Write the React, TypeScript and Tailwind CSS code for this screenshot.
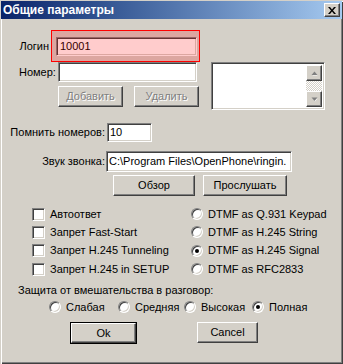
import React from "react";

const sunken =
  "bg-white border border-t-[#808080] border-l-[#808080] border-b-white border-r-white shadow-[inset_1px_1px_0_#404040,inset_-1px_-1px_0_#d4d0c8]";
const raised =
  "bg-[#d4d0c8] border border-t-white border-l-white border-b-[#404040] border-r-[#404040] shadow-[inset_-1px_-1px_0_#808080,inset_1px_1px_0_#d4d0c8]";

const Button = ({ label, w, disabled, isDefault }: { label: string; w: string; disabled?: boolean; isDefault?: boolean }) => {
  const btn = (
    <div className={`${raised} ${isDefault ? "w-full h-full" : `${w} h-[21px]`} flex items-center justify-center`}>
      <span className={disabled ? "text-[#808080] [text-shadow:1px_1px_0_#fff]" : ""}>{label}</span>
    </div>
  );
  if (!isDefault) return btn;
  return <div className={`${w} h-[22px] border border-black`}>{btn}</div>;
};

const Checkbox = () => <div className={`${sunken} w-[13px] h-[13px] shrink-0`} />;

const Radio = ({ on }: { on?: boolean }) => (
  <div className="w-[12px] h-[12px] shrink-0 rounded-full bg-white border border-t-[#808080] border-l-[#808080] border-b-white border-r-white shadow-[inset_1px_1px_0_#404040,inset_-1px_-1px_0_#d4d0c8] flex items-center justify-center">
    {on && <div className="w-[4px] h-[4px] rounded-full bg-black" />}
  </div>
);

const Arrow = ({ up }: { up?: boolean }) => (
  <svg width="7" height="5" viewBox="0 0 7 5">
    {up ? (
      <>
        <path d="M1.5 4.5h5L4 1.5z" fill="#fff" />
        <path d="M0.5 4h6L3.5 0.5z" fill="#808080" />
      </>
    ) : (
      <>
        <path d="M1.5 1.5h5L4 4.5z" fill="#fff" />
        <path d="M0.5 0.5h6L3.5 4z" fill="#808080" />
      </>
    )}
  </svg>
);

export default function App() {
  return (
    <div className="w-[343px] h-[364px] bg-[#d4d0c8] font-['Liberation_Sans',Arial,sans-serif] text-[11px] text-black leading-none shadow-[inset_1px_1px_0_#d4d0c8,inset_2px_2px_0_#fff,inset_-1px_-1px_0_#404040,inset_-2px_-2px_0_#808080] flex flex-col overflow-hidden select-none">
      {/* Title bar */}
      <div className="mx-[1px] mt-[1px] h-[18px] bg-gradient-to-r from-[#0a246a] to-[#a6caf0] flex items-center justify-between pl-[2px] pr-[2px]">
        <span className="text-white font-bold text-[12px]">Общие параметры</span>
        <div className={`${raised} w-[16px] h-[14px] flex items-center justify-center`}>
          <svg width="8" height="7" viewBox="0 0 8 7">
            <path d="M0 0h2l2 2.5L6 0h2L5 3.5 8 7H6L4 4.5 2 7H0l3-3.5z" fill="#000" />
          </svg>
        </div>
      </div>

      {/* Login */}
      <div className="mt-[11px] h-[32px] flex items-center">
        <span className="w-[50px] text-right pr-[1px]">Логин</span>
        <div className="relative ml-[1px] w-[149px] h-[32px] flex items-center pl-[5px]">
          <div className={`${sunken} w-[141px] h-[19px] flex items-center pl-[3px]`}>10001</div>
          <div className="absolute inset-0 border border-[#ff0000] bg-[rgba(255,0,0,0.2)]" />
        </div>
      </div>

      {/* Number + list */}
      <div className="flex h-[48px]">
        <div className="ml-[19px] w-[180px] flex flex-col">
          <div className="flex items-center h-[20px]">
            <span className="w-[39px]">Номер:</span>
            <div className={`${sunken} w-[139px] h-[20px]`} />
          </div>
          <div className="flex mt-[4px] ml-[39px] gap-[11px]">
            <Button label="Добавить" w="w-[65px]" disabled />
            <Button label="Удалить" w="w-[65px]" disabled />
          </div>
        </div>
        <div className={`${sunken} ml-[12px] w-[114px] h-[48px] flex p-[2px]`}>
          <div className="flex-1" />
          <div className="w-[16px] flex flex-col">
            <div className={`${raised} h-[16px] flex items-center justify-center`}>
              <Arrow up />
            </div>
            <div className="flex-1 bg-[repeating-conic-gradient(#fff_0_25%,#d4d0c8_0_50%)] bg-[length:2px_2px]" />
            <div className={`${raised} h-[16px] flex items-center justify-center`}>
              <Arrow />
            </div>
          </div>
        </div>
      </div>

      {/* Remember */}
      <div className="mt-[13px] flex items-center h-[19px]">
        <span className="w-[106px] text-right pr-[1px]">Помнить номеров:</span>
        <div className={`${sunken} ml-[1px] w-[45px] h-[19px] flex items-center pl-[2px]`}>10</div>
      </div>

      {/* Ring sound */}
      <div className="mt-[9px] flex items-center h-[21px]">
        <span className="w-[106px] text-right pr-[1px]">Звук звонка:</span>
        <div className={`${sunken} w-[186px] h-[21px] flex items-center pl-[2px] overflow-hidden whitespace-nowrap`}>
          C:\Program Files\OpenPhone\ringin.
        </div>
      </div>

      <div className="mt-[3px] flex ml-[113px] gap-[8px]">
        <Button label="Обзор" w="w-[82px]" />
        <Button label="Прослушать" w="w-[84px]" />
      </div>

      {/* Options */}
      <div className="mt-[9px] flex">
        <div className="ml-[32px] w-[159px] flex flex-col">
          {["Автоответ", "Запрет Fast-Start", "Запрет H.245 Tunneling", "Запрет H.245 in SETUP"].map((t) => (
            <div key={t} className="h-[18.3px] flex items-center gap-[5px]">
              <Checkbox />
              <span>{t}</span>
            </div>
          ))}
        </div>
        <div className="flex flex-col">
          {[
            ["DTMF as Q.931 Keypad", false],
            ["DTMF as H.245 String", false],
            ["DTMF as H.245 Signal", true],
            ["DTMF as RFC2833", false],
          ].map(([t, on]) => (
            <div key={t as string} className="h-[18.3px] flex items-center gap-[5px]">
              <Radio on={on as boolean} />
              <span>{t as string}</span>
            </div>
          ))}
        </div>
      </div>

      {/* Protection */}
      <div className="mt-[5px] ml-[18px] h-[14px] flex items-center">Защита от вмешательства в разговор:</div>
      <div className="mt-[3px] ml-[49px] h-[14px] flex items-center">
        {[
          ["Слабая", "w-[69px]", false],
          ["Средняя", "w-[66px]", false],
          ["Высокая", "w-[68px]", false],
          ["Полная", "w-[70px]", true],
        ].map(([t, w, on]) => (
          <div key={t as string} className={`${w} flex items-center gap-[5px]`}>
            <Radio on={on as boolean} />
            <span>{t as string}</span>
          </div>
        ))}
      </div>

      <div className="mt-[8px] flex ml-[70px] gap-[60px]">
        <Button label="Ok" w="w-[67px]" isDefault />
        <Button label="Cancel" w="w-[61px]" />
      </div>
    </div>
  );
}
